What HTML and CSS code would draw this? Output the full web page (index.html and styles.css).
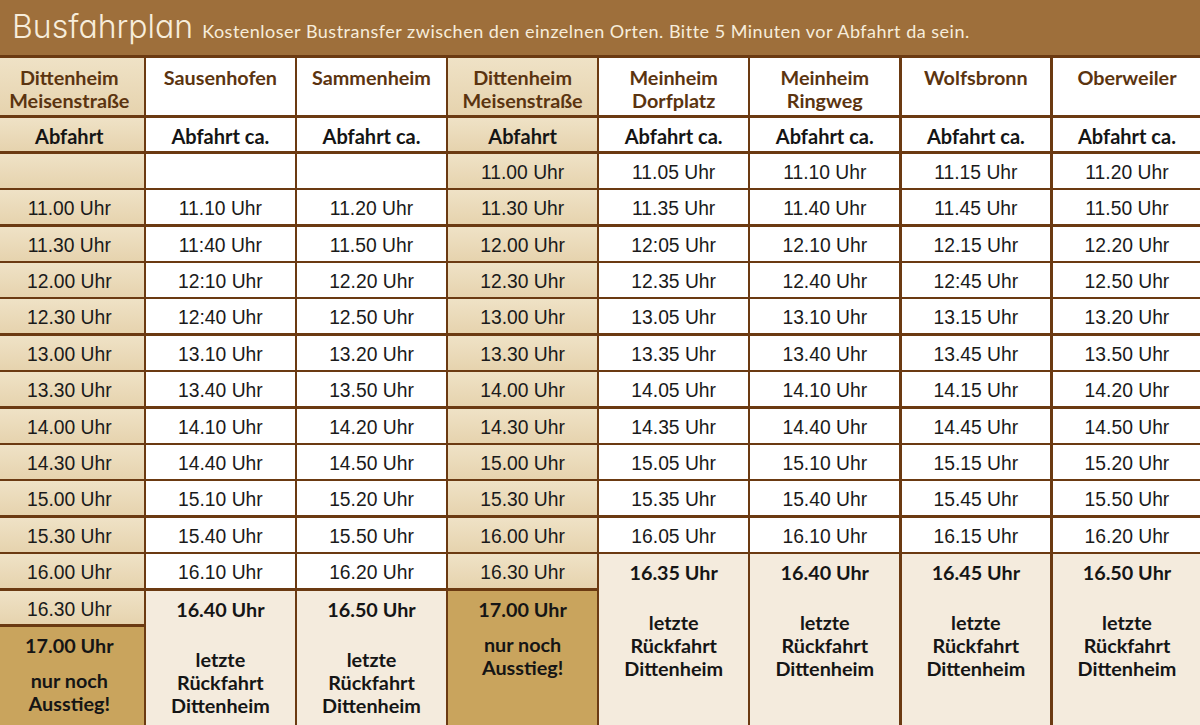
FILE: index.html
```html
<!DOCTYPE html>
<html lang="de">
<head>
<meta charset="utf-8">
<title>Busfahrplan</title>
<link rel="stylesheet" href="styles.css">
</head>
<body>
<div class="page">
  <header class="topbar">
    <h1 class="title">Busfahrplan</h1>
    <p class="subtitle">Kostenloser Bustransfer zwischen den einzelnen Orten. Bitte 5 Minuten vor Abfahrt da sein.</p>
  </header>
  <div class="plan">
    <div class="cell tan name">Dittenheim<br>Meisenstraße</div>
    <div class="cell white name">Sausenhofen</div>
    <div class="cell white name">Sammenheim</div>
    <div class="cell tan name">Dittenheim<br>Meisenstraße</div>
    <div class="cell white name">Meinheim<br>Dorfplatz</div>
    <div class="cell white name">Meinheim<br>Ringweg</div>
    <div class="cell white name">Wolfsbronn</div>
    <div class="cell white name">Oberweiler</div>

    <div class="cell tan label">Abfahrt</div>
    <div class="cell white label">Abfahrt ca.</div>
    <div class="cell white label">Abfahrt ca.</div>
    <div class="cell tan label">Abfahrt</div>
    <div class="cell white label">Abfahrt ca.</div>
    <div class="cell white label">Abfahrt ca.</div>
    <div class="cell white label">Abfahrt ca.</div>
    <div class="cell white label">Abfahrt ca.</div>

    <div class="cell tan time"></div>
    <div class="cell white time"></div>
    <div class="cell white time"></div>
    <div class="cell tan time">11.00 Uhr</div>
    <div class="cell white time">11.05 Uhr</div>
    <div class="cell white time">11.10 Uhr</div>
    <div class="cell white time">11.15 Uhr</div>
    <div class="cell white time">11.20 Uhr</div>

    <div class="cell tan time">11.00 Uhr</div>
    <div class="cell white time">11.10 Uhr</div>
    <div class="cell white time">11.20 Uhr</div>
    <div class="cell tan time">11.30 Uhr</div>
    <div class="cell white time">11.35 Uhr</div>
    <div class="cell white time">11.40 Uhr</div>
    <div class="cell white time">11.45 Uhr</div>
    <div class="cell white time">11.50 Uhr</div>

    <div class="cell tan time">11.30 Uhr</div>
    <div class="cell white time">11:40 Uhr</div>
    <div class="cell white time">11.50 Uhr</div>
    <div class="cell tan time">12.00 Uhr</div>
    <div class="cell white time">12:05 Uhr</div>
    <div class="cell white time">12.10 Uhr</div>
    <div class="cell white time">12.15 Uhr</div>
    <div class="cell white time">12.20 Uhr</div>

    <div class="cell tan time">12.00 Uhr</div>
    <div class="cell white time">12:10 Uhr</div>
    <div class="cell white time">12.20 Uhr</div>
    <div class="cell tan time">12.30 Uhr</div>
    <div class="cell white time">12.35 Uhr</div>
    <div class="cell white time">12.40 Uhr</div>
    <div class="cell white time">12:45 Uhr</div>
    <div class="cell white time">12.50 Uhr</div>

    <div class="cell tan time">12.30 Uhr</div>
    <div class="cell white time">12:40 Uhr</div>
    <div class="cell white time">12.50 Uhr</div>
    <div class="cell tan time">13.00 Uhr</div>
    <div class="cell white time">13.05 Uhr</div>
    <div class="cell white time">13.10 Uhr</div>
    <div class="cell white time">13.15 Uhr</div>
    <div class="cell white time">13.20 Uhr</div>

    <div class="cell tan time">13.00 Uhr</div>
    <div class="cell white time">13.10 Uhr</div>
    <div class="cell white time">13.20 Uhr</div>
    <div class="cell tan time">13.30 Uhr</div>
    <div class="cell white time">13.35 Uhr</div>
    <div class="cell white time">13.40 Uhr</div>
    <div class="cell white time">13.45 Uhr</div>
    <div class="cell white time">13.50 Uhr</div>

    <div class="cell tan time">13.30 Uhr</div>
    <div class="cell white time">13.40 Uhr</div>
    <div class="cell white time">13.50 Uhr</div>
    <div class="cell tan time">14.00 Uhr</div>
    <div class="cell white time">14.05 Uhr</div>
    <div class="cell white time">14.10 Uhr</div>
    <div class="cell white time">14.15 Uhr</div>
    <div class="cell white time">14.20 Uhr</div>

    <div class="cell tan time">14.00 Uhr</div>
    <div class="cell white time">14.10 Uhr</div>
    <div class="cell white time">14.20 Uhr</div>
    <div class="cell tan time">14.30 Uhr</div>
    <div class="cell white time">14.35 Uhr</div>
    <div class="cell white time">14.40 Uhr</div>
    <div class="cell white time">14.45 Uhr</div>
    <div class="cell white time">14.50 Uhr</div>

    <div class="cell tan time">14.30 Uhr</div>
    <div class="cell white time">14.40 Uhr</div>
    <div class="cell white time">14.50 Uhr</div>
    <div class="cell tan time">15.00 Uhr</div>
    <div class="cell white time">15.05 Uhr</div>
    <div class="cell white time">15.10 Uhr</div>
    <div class="cell white time">15.15 Uhr</div>
    <div class="cell white time">15.20 Uhr</div>

    <div class="cell tan time">15.00 Uhr</div>
    <div class="cell white time">15.10 Uhr</div>
    <div class="cell white time">15.20 Uhr</div>
    <div class="cell tan time">15.30 Uhr</div>
    <div class="cell white time">15.35 Uhr</div>
    <div class="cell white time">15.40 Uhr</div>
    <div class="cell white time">15.45 Uhr</div>
    <div class="cell white time">15.50 Uhr</div>

    <div class="cell tan time">15.30 Uhr</div>
    <div class="cell white time">15.40 Uhr</div>
    <div class="cell white time">15.50 Uhr</div>
    <div class="cell tan time">16.00 Uhr</div>
    <div class="cell white time">16.05 Uhr</div>
    <div class="cell white time">16.10 Uhr</div>
    <div class="cell white time">16.15 Uhr</div>
    <div class="cell white time">16.20 Uhr</div>

    <div class="cell tan time">16.00 Uhr</div>
    <div class="cell white time">16.10 Uhr</div>
    <div class="cell white time">16.20 Uhr</div>
    <div class="cell tan time">16.30 Uhr</div>
    <div class="cell cream block span3"><div class="btime">16.35 Uhr</div><div class="note last">letzte<br>Rückfahrt<br>Dittenheim</div></div>
    <div class="cell cream block span3"><div class="btime">16.40 Uhr</div><div class="note last">letzte<br>Rückfahrt<br>Dittenheim</div></div>
    <div class="cell cream block span3"><div class="btime">16.45 Uhr</div><div class="note last">letzte<br>Rückfahrt<br>Dittenheim</div></div>
    <div class="cell cream block span3"><div class="btime">16.50 Uhr</div><div class="note last">letzte<br>Rückfahrt<br>Dittenheim</div></div>

    <div class="cell tan time">16.30 Uhr</div>
    <div class="cell cream block span2"><div class="btime">16.40 Uhr</div><div class="note last">letzte<br>Rückfahrt<br>Dittenheim</div></div>
    <div class="cell cream block span2"><div class="btime">16.50 Uhr</div><div class="note last">letzte<br>Rückfahrt<br>Dittenheim</div></div>
    <div class="cell gold block span2"><div class="btime">17.00 Uhr</div><div class="note exit">nur noch<br>Ausstieg!</div></div>

    <div class="cell gold block"><div class="btime">17.00 Uhr</div><div class="note exit">nur noch<br>Ausstieg!</div></div>
  </div>
</div>
</body>
</html>
```

FILE: styles.css
```css
html, body {
  margin: 0;
  padding: 0;
}

body {
  width: 1200px;
  height: 725px;
  overflow: hidden;
  background: #f4ebdd;
  font-family: "Lato", "Liberation Sans", sans-serif;
}

.page {
  width: 1200px;
  height: 725px;
  overflow: hidden;
  display: flex;
  flex-direction: column;
}

.topbar {
  flex: 0 0 55px;
  height: 55px;
  background: #9e6f3b;
  display: flex;
  align-items: baseline;
  padding: 4px 0 0 12px;
  box-sizing: border-box;
  color: #f7eddb;
}

.title {
  margin: 0;
  font-family: "Inter", "Noto Sans", sans-serif;
  font-feature-settings: "cv11" 1;
  font-weight: 300;
  font-size: 32px;
  line-height: 46px;
  letter-spacing: 0px;
}

.subtitle {
  margin: 0 0 0 9px;
  font-family: "Lato", sans-serif;
  font-size: 18px;
  letter-spacing: 0.5px;
  font-weight: 400;
}

.plan {
  flex: 1 0 auto;
  margin-left: -5px;
  width: 1210px;
  background: #6b3a12;
  padding-top: 2.5px;
  display: grid;
  grid-template-columns: repeat(8, 148.6px);
  grid-template-rows: 57.5px repeat(14, 33.9px) 120px;
  gap: 2.5px;
  align-content: start;
}

.cell {
  text-align: center;
  box-sizing: border-box;
}

.tan {
  background: linear-gradient(#efe2c6, #e6d3ae);
}

.white {
  background: #ffffff;
}

.cream {
  background: #f4ebdd;
}

.gold {
  background: #c9a45d;
}

.name {
  padding-top: 8px;
  font-weight: 700;
  font-size: 19.8px;
  line-height: 23px;
  color: #5b3410;
}

.label {
  font-weight: 700;
  font-size: 20px;
  line-height: 36px;
  color: #151515;
}

.time {
  font-family: "Liberation Sans", Arial, sans-serif;
  font-size: 19.3px;
  line-height: 37px;
  color: #1a1a1a;
}

.span2 {
  grid-row: span 2;
}

.span3 {
  grid-row: span 3;
}

.btime {
  font-weight: 700;
  font-size: 19.8px;
  line-height: 37px;
  color: #151515;
}

.note {
  font-weight: 700;
  font-size: 19.8px;
  line-height: 23px;
  color: #151515;
}

.note.last {
  margin-top: 20px;
}

.note.exit {
  margin-top: 5px;
}
```
